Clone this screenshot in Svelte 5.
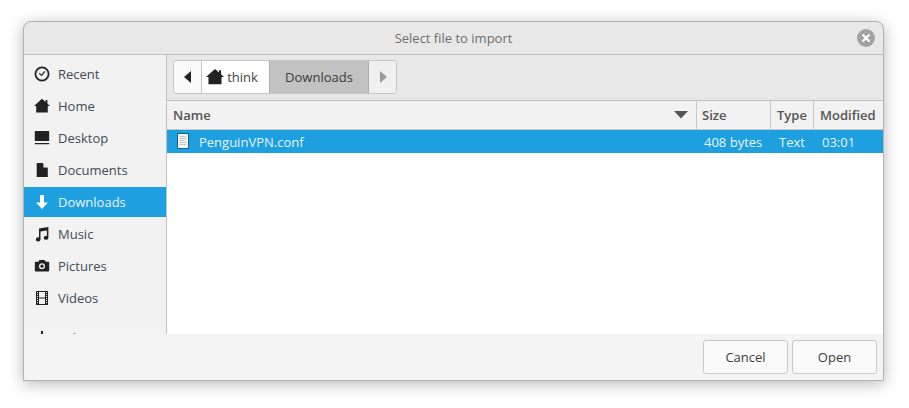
<script>
  const places = [
    { name: 'Recent', icon: 'recent' },
    { name: 'Home', icon: 'home' },
    { name: 'Desktop', icon: 'desktop' },
    { name: 'Documents', icon: 'documents' },
    { name: 'Downloads', icon: 'downloads', active: true },
    { name: 'Music', icon: 'music' },
    { name: 'Pictures', icon: 'pictures' },
    { name: 'Videos', icon: 'videos' },
    { name: 'Other Locations', icon: 'plus', extra: true }
  ];
</script>

{#snippet icon(kind)}
  <svg class="ico" viewBox="0 0 16 16" width="16" height="16">
    {#if kind === 'recent'}
      <circle cx="8" cy="8" r="6.6" fill="none" stroke="currentColor" stroke-width="1.8" />
      <path d="M5.200 7.400 7.600 9.400 10.800 5.400" fill="none" stroke="currentColor" stroke-width="1.200" />
    {:else if kind === 'home'}
      <path d="M8 .8 11.600 4V2h1.800v3.600L16 8h-2.200v6.400H2.200V8H0z" fill="currentColor" />
    {:else if kind === 'desktop'}
      <path d="M1.600 1h12.800a.8.8 0 0 1 .8.8V11H.8V1.800a.8.8 0 0 1 .8-.8zM.8 13h14.400v1.200H.8z" fill="currentColor" />
    {:else if kind === 'documents'}
      <path d="M2.700 1h6.300l4.800 5v9H2.700z" fill="currentColor" />
      <path d="M9.400 1 13.800 5.400H9.400z" fill="#f2f2f2" />
      <path d="M9.800 1 13.800 5.200" stroke="#f2f2f2" fill="none" />
    {:else if kind === 'downloads'}
      <path d="M6 1h4v7.500h4L8 15 2 8.500h4z" fill="currentColor" />
    {:else if kind === 'music'}
      <path d="M5 2.400 14.400 1v10.800a2.300 2 0 1 1-1.500-1.900V4.400L6.500 5.400v8a2.300 2 0 1 1-1.500-1.900z" fill="currentColor" />
    {:else if kind === 'pictures'}
      <path fill-rule="evenodd" d="M5.400 2h5.200l1 1.800h2.800c.5 0 .8.300.8.800v8c0 .5-.3.800-.8.800H1.600c-.5 0-.8-.3-.8-.8v-8c0-.5.3-.8.800-.8h2.800zM8 5.200a3 3 0 1 0 0 6 3 3 0 0 0 0-6z" fill="currentColor" />
      <circle cx="8" cy="8.200" r="1.600" fill="currentColor" />
    {:else if kind === 'videos'}
      <path fill-rule="evenodd" d="M2 1h12v14H2zM5 2v5.500h6V2zM5 8.500V14h6V8.500z" fill="currentColor" />
      <path d="M3.500 2v12M12.500 2v12" stroke="#f2f2f2" stroke-width="1" stroke-dasharray="1 1" />
    {:else if kind === 'plus'}
      <path d="M7 1h2v6h6v2H9v6H7V9H1V7h6z" fill="currentColor" />
    {/if}
  </svg>
{/snippet}

<div class="page">
  <div class="dialog">
    <header class="title">
      <span>Select file to import</span>
      <button class="close" aria-label="Close">
        <svg viewBox="0 0 10 10" width="10" height="10"><path d="M1.500 1.500l7 7M8.500 1.500l-7 7" stroke="#fff" stroke-width="2.200" /></svg>
      </button>
    </header>

    <div class="body">
      <aside class="sidebar">
        {#each places as p}
          <div class="place" class:active={p.active} class:extra={p.extra}>
            {@render icon(p.icon)}
            <span>{p.name}</span>
          </div>
        {/each}
      </aside>

      <section class="main">
        <div class="toolbar">
          <div class="pathbar">
            <button class="seg nav" aria-label="Back">
              <svg viewBox="0 0 8 12" width="8" height="12"><path d="M7 0v12L0 6z" fill="#222" /></svg>
            </button>
            <button class="seg think">
              <svg class="ico" viewBox="0 0 16 16" width="18" height="18"><path d="M8 .8 11.600 4V2h1.800v3.600L16 8h-2.200v6.400H2.200V8H0z" fill="#222" /></svg>
              think
            </button>
            <button class="seg current">Downloads</button>
            <button class="seg nav next" aria-label="Forward">
              <svg viewBox="0 0 8 12" width="8" height="12"><path d="M1 0v12l7-6z" fill="#9a9a9a" /></svg>
            </button>
          </div>
        </div>

        <div class="list">
          <div class="row head">
            <div class="col name">
              <span>Name</span>
              <svg class="sort" viewBox="0 0 14 8" width="14" height="8"><path d="M0 0h14L7 7.500z" fill="#555" /></svg>
            </div>
            <div class="col size">Size</div>
            <div class="col type">Type</div>
            <div class="col modified">Modified</div>
          </div>
          <div class="row file">
            <div class="col name">
              <svg class="doc" viewBox="0 0 12 16" width="12" height="16">
                <rect x=".5" y=".5" width="11" height="15" fill="#f4f4f4" stroke="#1b5f8c" />
                <path d="M2.500 3.500h6M2.500 5.500h7M2.500 7.500h5M2.500 9.500h7M2.500 11.500h6" stroke="#c4c4c4" stroke-width="1.200" />
              </svg>
              <span>PenguinVPN.conf</span>
            </div>
            <div class="col size">408 bytes</div>
            <div class="col type">Text</div>
            <div class="col modified">03:01</div>
          </div>
        </div>
      </section>
    </div>

    <footer class="actions">
      <button class="btn">Cancel</button>
      <button class="btn">Open</button>
    </footer>
  </div>
</div>

<style>
  :global(body) {
    background: #fff;
    font-family: "Open Sans", "Noto Sans", sans-serif;
    font-size: 13px;
    color: #3d3d3d;
  }

  button {
    font: inherit;
    color: inherit;
    padding: 0;
    border: 0;
    background: none;
  }

  .page {
    box-sizing: border-box;
    height: 408px;
    padding: 21px 25px 27px 23px;
  }

  .dialog {
    box-sizing: border-box;
    height: 360px;
    display: flex;
    flex-direction: column;
    overflow: hidden;
    border: 1px solid #b2b2b2;
    border-radius: 8px 8px 0 0;
    box-shadow: 0 3px 16px rgba(0, 0, 0, 0.28);
    background: #e8e8e8;
  }

  .title {
    flex: 0 0 32px;
    display: flex;
    align-items: center;
    justify-content: center;
    position: relative;
    color: #6e6e6e;
  }

  .close {
    position: absolute;
    right: 8px;
    top: 7px;
    width: 18px;
    height: 18px;
    border-radius: 50%;
    background: #a3a3a3;
    display: flex;
    align-items: center;
    justify-content: center;
  }

  .body {
    flex: 1;
    min-height: 0;
    display: flex;
    border-top: 1px solid #c0c0c0;
  }

  .sidebar {
    box-sizing: border-box;
    flex: 0 0 143px;
    background: #f2f2f2;
    border-right: 1px solid #c0c0c0;
    padding-top: 4px;
    overflow: hidden;
  }

  .place {
    height: 30px;
    margin-bottom: 2px;
    padding-left: 10px;
    display: flex;
    align-items: center;
    gap: 8px;
    white-space: nowrap;
    color: #3f4a56;
  }

  .place .ico {
    color: #222;
    flex: none;
  }

  .place.active {
    background: #1e9fdf;
    color: #e8f5fc;
  }

  .place.active .ico {
    color: #fff;
  }

  .place.extra {
    margin-top: 10px;
  }

  .main {
    flex: 1;
    min-width: 0;
    display: flex;
    flex-direction: column;
  }

  .toolbar {
    flex: 0 0 46px;
    box-sizing: border-box;
    padding: 5px 6px;
    border-bottom: 1px solid #c0c0c0;
  }

  .pathbar {
    display: inline-flex;
    height: 34px;
    box-sizing: border-box;
    border: 1px solid #c6c6c6;
    border-radius: 3px;
    background: #fafafa;
    overflow: hidden;
  }

  .seg {
    height: 100%;
    display: flex;
    align-items: center;
    justify-content: center;
  }

  .nav {
    width: 27px;
  }

  .think {
    width: 68px;
    gap: 3px;
    padding-right: 7px;
    box-sizing: border-box;
    border-left: 1px solid #c6c6c6;
    background: #fff;
    color: #444;
  }

  .current {
    width: 100px;
    background: #c2c2c2;
    border-left: 1px solid #adadad;
    border-right: 1px solid #adadad;
    box-sizing: border-box;
    color: #3a3a3a;
  }

  .next {
    background: #f0f0f0;
  }

  .list {
    flex: 1;
    background: #fff;
  }

  .row {
    display: grid;
    grid-template-columns: 530px 74px 43px 1fr;
  }

  .head {
    height: 29px;
    box-sizing: border-box;
    background: #f2f2f2;
    border-bottom: 1px solid #c8c8c8;
    font-weight: 600;
    color: #555;
  }

  .head .col {
    border-right: 1px solid #c8c8c8;
    padding-left: 5px;
  }

  .head .col:first-child {
    padding-left: 6px;
  }

  .head .type {
    padding-left: 6px;
  }

  .head .col:last-child {
    border-right: 0;
    padding-left: 6px;
  }

  .col {
    display: flex;
    align-items: center;
    padding-left: 8px;
    white-space: nowrap;
    min-width: 0;
    box-sizing: border-box;
  }

  .head .name {
    justify-content: space-between;
    padding-right: 8px;
  }

  .file {
    height: 23px;
    background: #1e9fdf;
    color: #e8f5fc;
  }

  .file .name {
    padding-left: 10px;
    gap: 10px;
  }

  .file .doc {
    margin-top: -2px;
  }

  .file .size {
    padding-left: 7px;
  }

  .actions {
    flex: 0 0 46px;
    display: flex;
    justify-content: flex-end;
    align-items: center;
    gap: 4px;
    padding-right: 6px;
    background: #f4f4f4;
  }

  .btn {
    width: 85px;
    height: 34px;
    box-sizing: border-box;
    border: 1px solid #c8c8c8;
    border-radius: 3px;
    background: #fafafa;
    color: #3d3d3d;
  }
</style>
